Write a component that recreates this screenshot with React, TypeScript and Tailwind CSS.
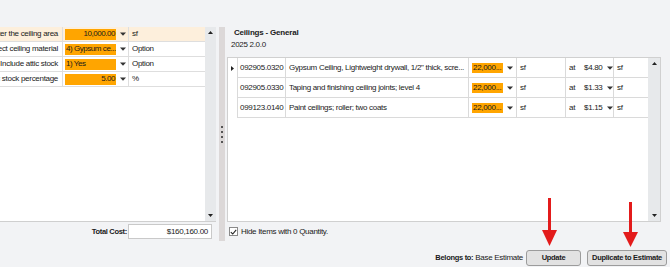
import React from "react";

const Caret = () => (
  <svg width="6" height="4" viewBox="0 0 6 4" className="shrink-0">
    <path d="M0 0.5H6L3 3.8Z" fill="#333" />
  </svg>
);

const UpArrow = () => (
  <svg width="5" height="3" viewBox="0 0 5 3">
    <path d="M0 3H5L2.5 0Z" fill="#222" />
  </svg>
);
const DownArrow = () => (
  <svg width="5" height="3" viewBox="0 0 5 3">
    <path d="M0 0H5L2.5 3Z" fill="#222" />
  </svg>
);

const leftRows = [
  { label: "Enter the ceiling area", value: "10,000.00", right: true, unit: "sf", hl: true },
  { label: "Select ceiling material", value: "4) Gypsum ce...", right: false, unit: "Option", hl: false },
  { label: "Include attic stock", value: "1) Yes", right: false, unit: "Option", hl: false },
  { label: "Attic stock percentage", value: "5.00", right: true, unit: "%", hl: false },
];

const rightRows = [
  { id: "092905.0320", desc: "Gypsum Ceiling, Lightweight drywall, 1/2\" thick, scre...", qty: "22,000...", price: "$4.80", sel: true },
  { id: "092905.0330", desc: "Taping and finishing ceiling joints; level 4", qty: "22,000...", price: "$1.33", sel: false },
  { id: "099123.0140", desc: "Paint ceilings; roller; two coats", qty: "22,000...", price: "$1.15", sel: false },
];

function Scrollbar({ w }: { w: string }) {
  return (
    <div className={`${w} h-full bg-[#e7e9eb] flex flex-col items-center justify-between py-[4px]`}>
      <UpArrow />
      <DownArrow />
    </div>
  );
}

export default function App() {
  return (
    <div className="w-[670px] h-[267px] relative overflow-hidden bg-[#f2f3f5] text-[8px] tracking-[-0.3px] leading-none text-[#1a1a1a] font-['Liberation_Sans',Arial,sans-serif]">
      <div className="flex h-[241px]">
        {/* Left pane */}
        <div className="w-[219px] flex flex-col pt-[27px]">
          <div className="w-[216px] h-[195px] flex bg-white border-b border-[#cfcfcf]">
            <div className="w-[205px] flex flex-col">
              {leftRows.map((r, i) => (
                <div
                  key={i}
                  className={`flex h-[15px] border-b border-[#dedede] ${r.hl ? "bg-[#fdefdc]" : "bg-white"}`}
                >
                  <div className="w-[63px] border-r border-[#dedede] flex items-center justify-end pr-[4px] overflow-hidden whitespace-nowrap">
                    <span className="shrink-0">{r.label}</span>
                  </div>
                  <div className="w-[66px] border-r border-[#dedede] flex items-center pl-[2px]">
                    <div
                      className={`w-[51px] h-[11px] bg-[#ffa500] flex items-center overflow-hidden whitespace-nowrap tracking-[-0.45px] ${
                        r.right ? "justify-end pr-[1px]" : "pl-[1px]"
                      }`}
                    >
                      {r.value}
                    </div>
                    <div className="ml-[4px]">
                      <Caret />
                    </div>
                  </div>
                  <div className="flex-1 flex items-center pl-[3px]">{r.unit}</div>
                </div>
              ))}
            </div>
            <Scrollbar w="w-[11px]" />
          </div>
          <div className="h-[19px] flex items-center justify-end pr-[7px] gap-[1px]">
            <span className="font-bold text-[7.5px]">Total Cost:</span>
            <div className="w-[84px] h-[15px] bg-white border border-[#c9c9c9] flex items-center justify-end pr-[3px]">
              $160,160.00
            </div>
          </div>
        </div>

        {/* Splitter */}
        <div className="w-[6px] mt-[27px] h-[214px] bg-[#dcd8d8] flex flex-col items-center justify-center gap-[3px]">
          <div className="w-[2px] h-[2px] bg-[#555]" />
          <div className="w-[2px] h-[2px] bg-[#555]" />
          <div className="w-[2px] h-[2px] bg-[#555]" />
          <div className="w-[2px] h-[2px] bg-[#555]" />
        </div>

        {/* Right pane */}
        <div className="flex-1 flex flex-col">
          <div className="mt-[29px] pl-[9px] h-[9px] font-bold tracking-[-0.2px]">Ceilings - General</div>
          <div className="mt-[3px] pl-[6px] h-[9px]">2025 2.0.0</div>
          <div className="mt-[7px] ml-[2px] w-[434px] h-[165px] bg-white border border-[#d0d0d0] flex">
            <div className="flex-1 flex flex-col">
              {rightRows.map((r, i) => (
                <div key={i} className="flex h-[20px]">
                  <div className="w-[10px] border-r border-[#dadada] flex items-center justify-center">
                    {r.sel && (
                      <svg width="3" height="5" viewBox="0 0 3 5">
                        <path d="M0 0L3 2.5L0 5Z" fill="#222" />
                      </svg>
                    )}
                  </div>
                  <div className="w-[48px] border-r border-b border-[#dadada] flex items-center pl-[2px]">{r.id}</div>
                  <div className="w-[183px] border-r border-b border-[#dadada] flex items-center pl-[3px] pr-[3px] overflow-hidden whitespace-nowrap">
                    {r.desc}
                  </div>
                  <div className="w-[48px] border-r border-b border-[#dadada] flex items-center pl-[3px]">
                    <div className="w-[31px] h-[10px] bg-[#ffa500] flex items-center pl-[1px] overflow-hidden whitespace-nowrap">
                      {r.qty}
                    </div>
                    <div className="ml-[4px]">
                      <Caret />
                    </div>
                  </div>
                  <div className="w-[49px] border-r border-b border-[#dadada] flex items-center pl-[3px]">sf</div>
                  <div className="w-[48px] border-r border-b border-[#dadada] flex items-center pl-[3px]">
                    <span className="w-[15px]">at</span>
                    <span className="w-[23px]">{r.price}</span>
                    <Caret />
                  </div>
                  <div className="flex-1 border-b border-[#dadada] flex items-center pl-[3px]">sf</div>
                </div>
              ))}
            </div>
            <Scrollbar w="w-[12px]" />
          </div>
          <div className="h-[19px] flex items-center pl-[4px] gap-[3px]">
            <div className="w-[9px] h-[9px] bg-white border border-[#8a8a8a] flex items-center justify-center">
              <svg width="7" height="6" viewBox="0 0 7 6">
                <path d="M0.8 3.2L2.7 5L6.2 0.8" stroke="#222" strokeWidth="1.1" fill="none" />
              </svg>
            </div>
            <span>Hide Items with 0 Quantity.</span>
          </div>
        </div>
      </div>

      {/* Bottom bar */}
      <div className="h-[26px] flex justify-end items-end pb-[1px] pr-[3px]">
        <div className="h-[16px] flex items-center mr-[3px]">
          <span className="font-bold text-[7.5px] mr-[2px]">Belongs to:</span>
          <span>Base Estimate</span>
        </div>
        <div className="w-[55px] h-[16px] bg-[#e2e2e2] border border-[#9c9c9c] rounded-[3px] flex items-center justify-center font-bold text-[7.5px]">
          Update
        </div>
        <div className="w-[80px] h-[16px] ml-[6px] bg-[#e2e2e2] border border-[#9c9c9c] rounded-[3px] flex items-center justify-center font-bold text-[7.5px]">
          Duplicate to Estimate
        </div>
      </div>

      {/* Red annotation arrows */}
      <svg className="absolute left-0 top-0 pointer-events-none" width="670" height="267" viewBox="0 0 670 267">
        <rect x="548" y="198" width="3" height="34" fill="#e31b1b" />
        <path d="M542 230H557L549.5 246Z" fill="#e31b1b" />
        <rect x="629" y="202" width="3" height="31" fill="#e31b1b" />
        <path d="M623 232H638L630.5 247Z" fill="#e31b1b" />
      </svg>
    </div>
  );
}
